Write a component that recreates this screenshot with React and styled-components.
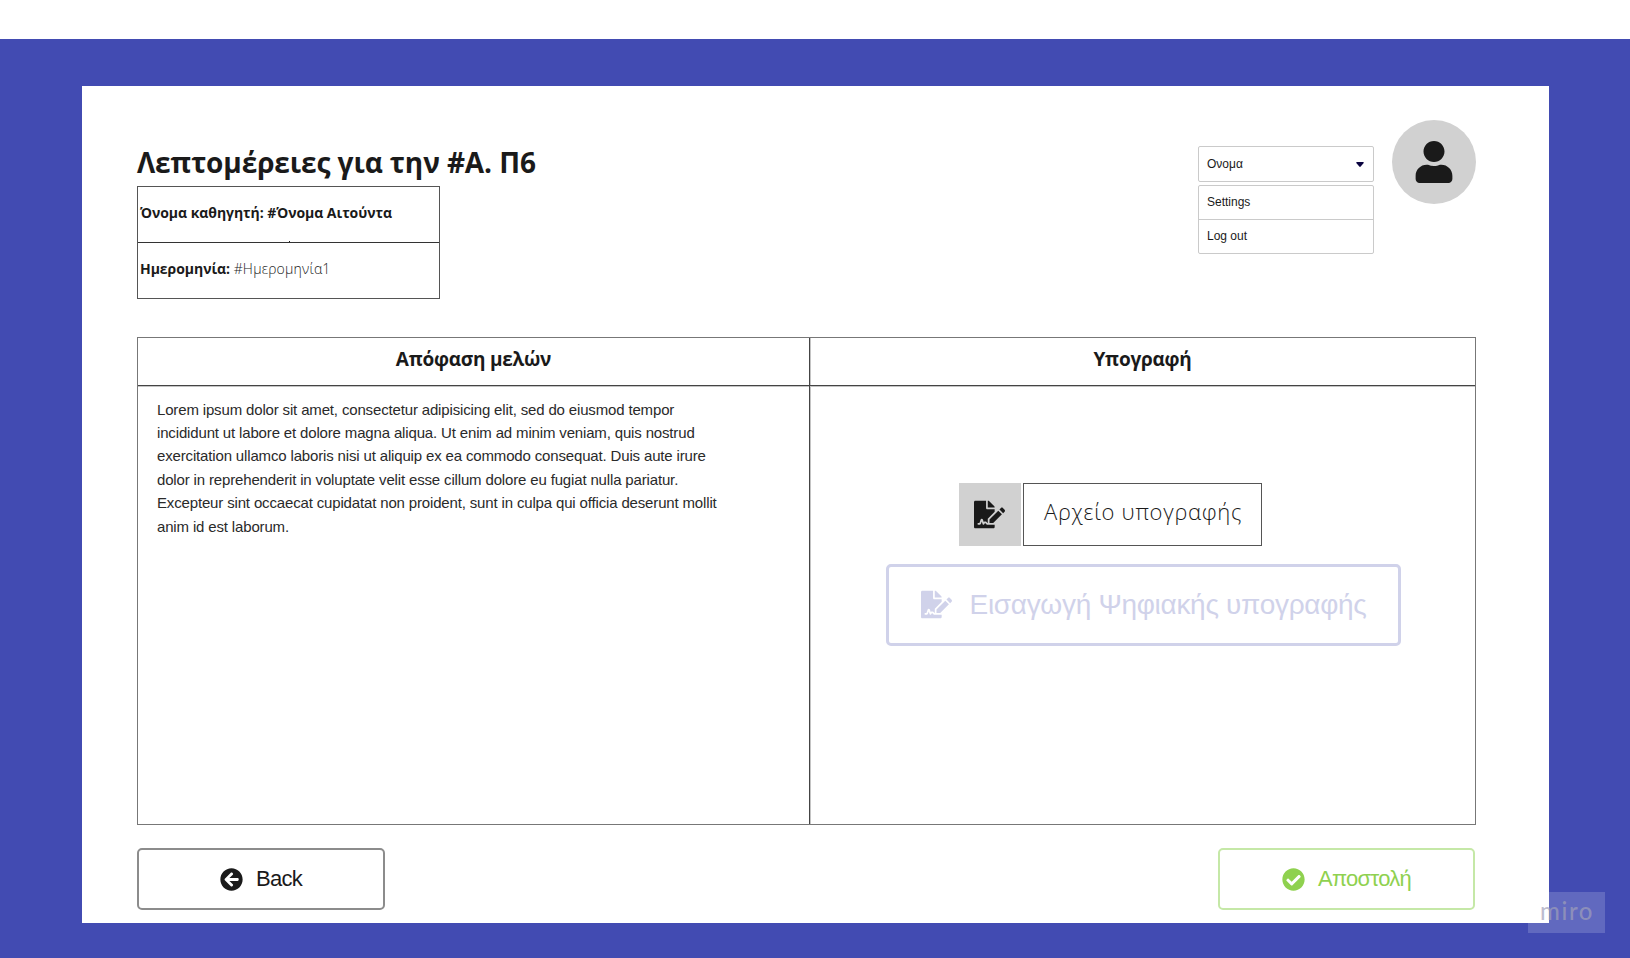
import React from "react";
import styled, { createGlobalStyle } from "styled-components";
import { FaUser, FaFileSignature, FaArrowCircleLeft, FaCheckCircle } from "react-icons/fa";

const GlobalStyle = createGlobalStyle`
  * { box-sizing: border-box; }
  body { margin: 0; background: #fff; color: #1a1a1a; font-family: "Open Sans", "Noto Sans", sans-serif; }
  h1, h2, p { margin: 0; }
  button { background: none; padding: 0; color: inherit; }
`;

const Screen = styled.div`
  width: 1630px;
  height: 958px;
  padding-top: 39px;
  overflow: hidden;
`;

const Backdrop = styled.div`
  position: relative;
  height: 919px;
  padding: 47px 81px 0 82px;
  background: #424bb2;
`;

const Card = styled.main`
  height: 837px;
  padding: 34px 73px 0 55px;
  background: #fff;
`;

const Header = styled.header`
  display: flex;
  justify-content: space-between;
  height: 217px;
`;

const Intro = styled.div`
  padding-top: 23px;
`;

const Title = styled.h1`
  height: 43px;
  line-height: 38px;
  font-size: 28px;
  font-weight: 700;
  letter-spacing: -0.1px;
  white-space: nowrap;
`;

const InfoTable = styled.div`
  width: 303px;
  border: 1px solid #555;
`;

const InfoRow = styled.div`
  position: relative;
  display: flex;
  align-items: center;
  height: 55px;
  padding: 0 0 4px 2px;
  font-size: 14px;
  white-space: pre;
  & + & {
    height: 56px;
    border-top: 1px solid #333;
  }
  /* small knob in the middle of the line between the rows */
  & + &::before {
    content: "";
    position: absolute;
    top: -2px;
    left: 50%;
    width: 1px;
    height: 1px;
    background: #1a1a1a;
  }
`;

const InfoText = styled.span`
  font-weight: ${(p) => (p.$strong ? 700 : 300)};
  letter-spacing: ${(p) => (p.$strong ? "-0.05px" : "0.2px")};
`;

const Account = styled.div`
  display: flex;
  gap: 18px;
`;

const Menu = styled.div`
  width: 176px;
  padding-top: 26px;
  font: 12px "Liberation Sans", Arial, sans-serif;
`;

const Select = styled.div`
  display: flex;
  align-items: center;
  justify-content: space-between;
  height: 36px;
  padding: 0 9px 0 8px;
  border: 1px solid #cacaca;
  border-radius: 2px;
`;

const Caret = styled.svg`
  width: 8px;
  height: 5px;
  fill: #0b0440;
`;

const Options = styled.div`
  margin-top: 3px;
  border: 1px solid #cacaca;
  border-radius: 2px;
`;

const Option = styled.div`
  display: flex;
  align-items: center;
  height: 33px;
  padding: 0 0 2px 8px;
  & + & {
    height: 34px;
    border-top: 1px solid #cacaca;
  }
`;

const Avatar = styled.div`
  display: flex;
  align-items: center;
  justify-content: center;
  width: 84px;
  height: 84px;
  border-radius: 50%;
  background: #d1d1d1;
`;

const Panels = styled.section`
  display: grid;
  grid-template-columns: 671px 1fr;
  height: 488px;
  border: 1px solid #777;
`;

const Panel = styled.div`
  display: flex;
  flex-direction: column;
  & + & {
    border-left: 1px solid #444;
    box-shadow: inset 1px 0 #c4c4c4;
  }
`;

const PanelTitle = styled.h2`
  height: 48px;
  padding-top: 8px;
  border-bottom: 1px solid #444;
  box-shadow: 0 1px #c4c4c4;
  text-align: center;
  font-size: 19px;
  line-height: 26px;
  font-weight: 700;
  letter-spacing: -0.25px;
`;

const Decision = styled.p`
  padding: 11.5px 0 0 19px;
  color: #2a2a2a;
  font: 15px/23.4px "Liberation Sans", Arial, sans-serif;
  letter-spacing: -0.155px;
  white-space: pre-line;
`;

const Signing = styled.div`
  display: flex;
  flex-direction: column;
  padding: 97px 0 0 76px;
  gap: 18px;
`;

const FileField = styled.div`
  display: flex;
  gap: 2px;
  height: 63px;
  margin-left: 73px;
`;

const FileIcon = styled.div`
  display: flex;
  align-items: center;
  justify-content: center;
  width: 62px;
  padding-right: 1px;
  background: #d1d1d1;
`;

const FileName = styled.div`
  width: 239px;
  padding-left: 20px;
  border: 1px solid #555;
  font-size: 22px;
  font-weight: 300;
  line-height: 55px;
  letter-spacing: 0.7px;
  white-space: nowrap;
`;

const Actions = styled.footer`
  display: flex;
  justify-content: space-between;
  padding: 23px 1px 0 0;
`;

const Button = styled.button`
  display: flex;
  align-items: center;
  justify-content: center;
  gap: ${(p) => p.$gap || "13px"};
  width: ${(p) => p.$width};
  height: ${(p) => p.$height || "62px"};
  padding-bottom: ${(p) => p.$lift || "0"};
  border: ${(p) => p.$stroke || "2px"} solid ${(p) => p.$line};
  border-radius: 5px;
  color: ${(p) => p.$color};
  font: ${(p) => p.$size || "22px"} "Liberation Sans", Arial, sans-serif;
  letter-spacing: ${(p) => p.$tracking || "-0.7px"};
  white-space: nowrap;
`;

const Watermark = styled.div`
  position: absolute;
  left: 1528px;
  top: 853px;
  width: 77px;
  height: 41px;
  padding-left: 12px;
  background: rgba(255, 255, 255, 0.17);
  color: rgba(160, 160, 185, 0.7);
  font: 500 24px/38px Lato, sans-serif;
  letter-spacing: 1.6px;
`;

export default function App() {
  return (
    <Screen>
      <GlobalStyle />
      <Backdrop>
        <Card>
          <Header>
            <Intro>
              <Title>Λεπτομέρειες για την #Α. Π6</Title>
              <InfoTable>
                <InfoRow><InfoText $strong>Όνομα καθηγητή: #Όνομα Αιτούντα</InfoText></InfoRow>
                <InfoRow>
                  <InfoText $strong>{"Ημερομηνία: "}</InfoText>
                  <InfoText>#Ημερομηνία1</InfoText>
                </InfoRow>
              </InfoTable>
            </Intro>
            <Account>
              <Menu>
                <Select>
                  Ονομα
                  <Caret viewBox="0 0 8 5"><path d="M1 0h6q1.300 .5.500 1.300L4.700 4.600q-.7.600-1.400 0L.5 1.300Q-.3.500 1 0z" /></Caret>
                </Select>
                <Options>
                  <Option>Settings</Option>
                  <Option>Log out</Option>
                </Options>
              </Menu>
              <Avatar><FaUser size={42} /></Avatar>
            </Account>
          </Header>
          <Panels>
            <Panel>
              <PanelTitle>Απόφαση μελών</PanelTitle>
              <Decision>
                {`Lorem ipsum dolor sit amet, consectetur adipisicing elit, sed do eiusmod tempor
                incididunt ut labore et dolore magna aliqua. Ut enim ad minim veniam, quis nostrud
                exercitation ullamco laboris nisi ut aliquip ex ea commodo consequat. Duis aute irure
                dolor in reprehenderit in voluptate velit esse cillum dolore eu fugiat nulla pariatur.
                Excepteur sint occaecat cupidatat non proident, sunt in culpa qui officia deserunt mollit
                anim id est laborum.`}
              </Decision>
            </Panel>
            <Panel>
              <PanelTitle>Υπογραφή</PanelTitle>
              <Signing>
                <FileField>
                  <FileIcon><FaFileSignature size={31} /></FileIcon>
                  <FileName>Αρχείο υπογραφής</FileName>
                </FileField>
                <Button $width="515px" $height="82px" $stroke="3px" $gap="18px" $lift="1px" $line="#d0d2ea" $color="#d0d2ea"
                  $size="28px" $tracking="-0.3px">
                  <FaFileSignature size={31} />
                  <span>Εισαγωγή Ψηφιακής υπογραφής</span>
                </Button>
              </Signing>
            </Panel>
          </Panels>
          <Actions>
            <Button $width="248px" $line="#8c8c8c" $color="#1a1a1a">
              <FaArrowCircleLeft size={23} />
              <span>Back</span>
            </Button>
            <Button $width="257px" $line="#c5e8a7" $color="#8fd14f">
              <FaCheckCircle size={23} />
              <span>Αποστολή</span>
            </Button>
          </Actions>
        </Card>
        <Watermark>miro</Watermark>
      </Backdrop>
    </Screen>
  );
}
